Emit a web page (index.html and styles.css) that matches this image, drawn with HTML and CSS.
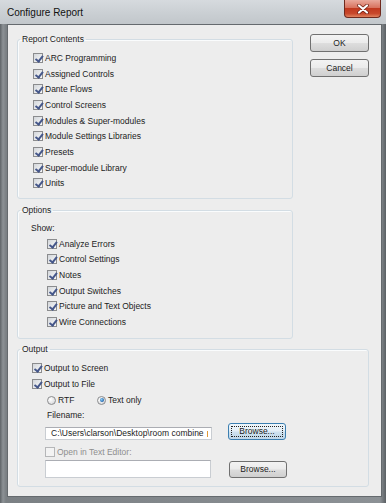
FILE: index.html
```html
<!DOCTYPE html>
<html>
  <head>
    <meta charset="UTF-8" />
    <title>Configure Report</title>
    <link rel="stylesheet" href="styles.css">
  </head>
  <body>
    <div class="window">
      <div class="titlebar">
        <span class="title">Configure Report</span>
        <span class="close">
          <svg width="14" height="10" viewBox="0 0 14 10">
            <path d="M3 1.5 L11 8.5 M11 1.5 L3 8.5" stroke="#6b1b10" stroke-width="3.6" stroke-linecap="round" />
            <path d="M3 1.5 L11 8.5 M11 1.5 L3 8.5" stroke="#fff" stroke-width="2.2" stroke-linecap="round" />
          </svg>
        </span>
      </div>
      <div class="client">
        <div class="top">
          <div class="groups">
            <fieldset class="group g-contents">
              <legend>Report Contents</legend>
              <div class="inner">
                <label class="row"><span class="cb on"></span>ARC Programming</label>
                <label class="row"><span class="cb on"></span>Assigned Controls</label>
                <label class="row"><span class="cb on"></span>Dante Flows</label>
                <label class="row"><span class="cb on"></span>Control Screens</label>
                <label class="row"><span class="cb on"></span>Modules &amp; Super-modules</label>
                <label class="row"><span class="cb on"></span>Module Settings Libraries</label>
                <label class="row"><span class="cb on"></span>Presets</label>
                <label class="row"><span class="cb on"></span>Super-module Library</label>
                <label class="row"><span class="cb on"></span>Units</label>
              </div>
            </fieldset>
            <fieldset class="group g-options">
              <legend>Options</legend>
              <div class="inner">
                <div class="row">Show:</div>
                <div class="indent">
                  <label class="row"><span class="cb on"></span>Analyze Errors</label>
                  <label class="row"><span class="cb on"></span>Control Settings</label>
                  <label class="row"><span class="cb on"></span>Notes</label>
                  <label class="row"><span class="cb on"></span>Output Switches</label>
                  <label class="row"><span class="cb on"></span>Picture and Text Objects</label>
                  <label class="row"><span class="cb on"></span>Wire Connections</label>
                </div>
              </div>
            </fieldset>
          </div>
          <div class="buttons">
            <button class="btn">OK</button>
            <button class="btn">Cancel</button>
          </div>
        </div>
        <fieldset class="group g-output">
          <legend>Output</legend>
          <div class="inner">
            <label class="row"><span class="cb on"></span>Output to Screen</label>
            <label class="row"><span class="cb on"></span>Output to File</label>
            <div class="row radios">
              <label class="radio-item"><span class="rb"></span>RTF</label>
              <label class="radio-item"><span class="rb on"></span>Text only</label>
            </div>
            <div class="row label-row">Filename:</div>
            <div class="file-row">
              <div class="textbox small">C:\Users\clarson\Desktop\room combine<span class="caret"></span></div>
              <button class="btn browse focus"><span>Browse...</span></button>
            </div>
            <label class="row disabled"><span class="cb off"></span>Open in Text Editor:</label>
            <div class="file-row second">
              <div class="textbox tall"></div>
              <button class="btn browse">Browse...</button>
            </div>
          </div>
        </fieldset>
      </div>
    </div>
  </body>
</html>
```

FILE: styles.css
```css
* {
  box-sizing: border-box;
  margin: 0;
  padding: 0;
}

body {
  width: 386px;
  height: 503px;
  overflow: hidden;
  font-family: "Liberation Sans", Arial, sans-serif;
  font-size: 8.5px;
  color: #1c1c1c;
  background-color: #7a7f83;
}

.window {
  width: 386px;
  height: 503px;
  display: flex;
  flex-direction: column;
  background: linear-gradient(90deg, #5f6468 0, #8d9296 3px, #7b8084 6px, #8c9195 380px, #5b6064 386px);
}

.titlebar {
  height: 24px;
  display: flex;
  align-items: flex-start;
  padding-left: 7px;
  background: linear-gradient(180deg, #d6dade 0, #c9ced2 60%, #c2c7cb 100%);
}

.title {
  margin-top: 7px;
  line-height: 12px;
  font-size: 10px;
  color: #111;
}

.close {
  margin-left: auto;
  margin-right: 5px;
  width: 37px;
  height: 18px;
  display: flex;
  align-items: center;
  justify-content: center;
  border: 1px solid #6f2a1e;
  border-top: none;
  border-radius: 0 0 4px 4px;
  background: linear-gradient(180deg, #e9a99c 0, #d8735f 45%, #c1391f 50%, #c8492c 80%, #e0835f 100%);
}

.client {
  flex: 1;
  margin: 0 4px 6px 7px;
  padding: 9px 12px 0 9px;
  background-color: #ededed;
  border: 1px solid #656a6e;
}

.top {
  display: flex;
}

.groups {
  width: 279px;
}

.group {
  border: 1px solid #d3dde4;
  border-radius: 3px;
  box-shadow: inset 1px 1px 0 #fafcfd;
  min-width: 0;
}

.group legend {
  margin-left: 2px;
  padding: 0 2px;
  line-height: 11px;
}

.g-contents {
  height: 165px;
}

.g-contents .inner {
  padding: 5px 0 0 15px;
}

.g-options {
  margin-top: 6px;
  height: 134px;
}

.g-options .inner {
  padding: 4px 0 0 13px;
}

.indent {
  margin-left: 16px;
}

.g-output {
  margin-top: 5px;
  width: 352px;
  height: 143px;
}

.g-output .inner {
  padding: 5px 0 0 14px;
}

.row {
  display: flex;
  align-items: center;
  height: 15.7px;
}

.cb {
  position: relative;
  width: 10px;
  height: 10px;
  margin-right: 2px;
  border: 1px solid #8b8c8e;
  background: linear-gradient(135deg, #d3d6da 0, #eaecee 60%, #f7f7f7 100%);
  flex-shrink: 0;
}

.cb.on::after {
  content: "";
  position: absolute;
  left: 2.5px;
  top: 0;
  width: 2.5px;
  height: 5.5px;
  border: solid #45578a;
  border-width: 0 2px 2px 0;
  transform: rotate(38deg);
}

.cb.off {
  border-color: #b5b6b8;
  background: #f3f3f3;
}

.disabled {
  color: #8e8e8e;
  margin-top: 4.5px;
  height: 15px;
  margin-left: 13px;
}

.radios {
  margin-top: 1px;
  height: 16px;
  margin-left: 15px;
}

.radio-item {
  display: flex;
  align-items: center;
  width: 50px;
}

.rb {
  position: relative;
  width: 9px;
  height: 9px;
  margin-right: 2px;
  border: 1px solid #8b8c8e;
  border-radius: 50%;
  background: radial-gradient(circle at 35% 35%, #ffffff 0, #e2e3e5 60%, #c9cbce 100%);
}

.rb.on::after {
  content: "";
  position: absolute;
  left: 1.5px;
  top: 1.5px;
  width: 4px;
  height: 4px;
  border-radius: 50%;
  background: radial-gradient(circle at 40% 40%, #8fd0f5 0, #2c72b8 60%, #1b3f74 100%);
}

.label-row {
  height: 13px;
  margin-left: 15px;
}

.file-row {
  display: flex;
  align-items: flex-end;
  margin-top: 1.6px;
  margin-left: 13px;
  height: 17px;
}

.file-row.second {
  margin-top: 0.5px;
  height: 18px;
}

.textbox {
  background-color: #fff;
  border: 1px solid #c9cdd2;
  border-top-color: #abadb3;
  white-space: nowrap;
  overflow: hidden;
}

.textbox.small {
  width: 167px;
  height: 13px;
  padding-left: 5px;
  line-height: 11px;
}

.textbox.tall {
  width: 166px;
  height: 18px;
}

.caret {
  display: inline-block;
  width: 1px;
  height: 6px;
  margin-left: 3px;
  vertical-align: middle;
  background-color: #e09a3a;
}

.btn {
  width: 59px;
  height: 18px;
  font-family: "Liberation Sans", Arial, sans-serif;
  font-size: 8.5px;
  color: #1c1c1c;
  border: 1px solid #707070;
  border-radius: 3px;
  background: linear-gradient(180deg, #f3f3f3 0, #ebebeb 48%, #dddddd 52%, #cfcfcf 100%);
  display: flex;
  align-items: center;
  justify-content: center;
}

.buttons {
  margin-left: 17px;
  display: flex;
  flex-direction: column;
}

.buttons .btn + .btn {
  margin-top: 7px;
}

.browse {
  width: 58px;
  height: 17px;
  margin-left: 16px;
}

.second .browse {
  margin-left: 18px;
}

.browse.focus {
  border-color: #3c7fb1;
  background: linear-gradient(180deg, #eef6fb 0, #e3eef6 48%, #cfe2ef 52%, #bed6e8 100%);
  padding: 2px;
}

.browse.focus span {
  width: 100%;
  height: 100%;
  display: flex;
  align-items: center;
  justify-content: center;
  border: 1px dotted #222;
}
```
